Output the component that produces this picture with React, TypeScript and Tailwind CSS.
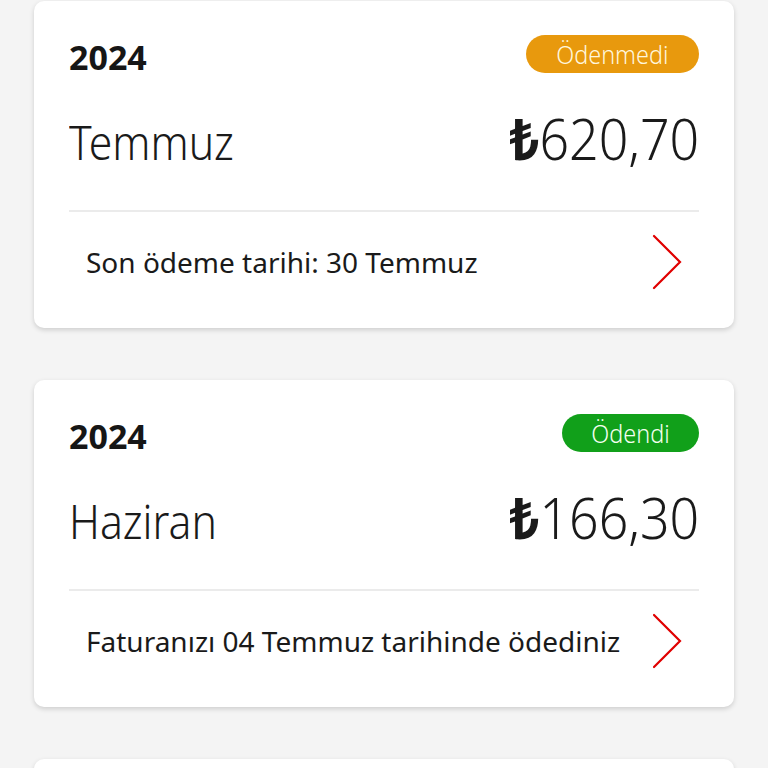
type Bill = {
  year: string;
  status: string;
  paid: boolean;
  month: string;
  amount: string;
  note: string;
};

const bills: Bill[] = [
  { year: "2024", status: "Ödenmedi", paid: false, month: "Temmuz", amount: "620,70", note: "Son ödeme tarihi: 30 Temmuz" },
  { year: "2024", status: "Ödendi", paid: true, month: "Haziran", amount: "166,30", note: "Faturanızı 04 Temmuz tarihinde ödediniz" },
];

function Chevron() {
  return (
    <svg width="30" height="56" viewBox="0 0 30 56" fill="none" className="shrink-0">
      <path d="M2 2 L28 28 L2 54" stroke="#e00000" strokeWidth="2.2" strokeLinecap="round" strokeLinejoin="miter" />
    </svg>
  );
}

function BillCard({ bill }: { bill: Bill }) {
  return (
    <div className="shrink-0 rounded-[10px] bg-white px-[35px] pt-[34px] shadow-[0_2px_5px_rgba(0,0,0,0.16)]">
      <div className="flex h-[38px] items-center justify-between">
        <span className="pt-[6px] text-[34px] font-bold leading-none text-[#161616]">{bill.year}</span>
        <span
          className={
            bill.paid
              ? "flex h-[38px] w-[137px] items-center justify-center rounded-full bg-[#11a01a] text-[26px] font-light leading-none text-[#f4fff0]"
              : "flex h-[38px] w-[173px] items-center justify-center rounded-full bg-[#e8990d] text-[26px] font-light leading-none text-[#fff6dc]"
          }
        >
          <span className="inline-block scale-x-[0.9]">{bill.status}</span>
        </span>
      </div>
      <div className="mt-[37px] flex items-baseline justify-between font-light leading-none text-[#1a1a1a]">
        <span className="inline-block origin-left scale-x-[0.89] text-[48px]">{bill.month}</span>
        <span className="inline-block origin-right scale-x-[0.91] text-[57px]">
          <span className="font-bold">₺</span>
          {bill.amount}
        </span>
      </div>
      <div className="mt-[43px] h-[2px] bg-[#ebebeb]" />
      <div className="flex h-[100px] items-center justify-between pl-[17px] pr-[17px]">
        <span className="text-[28px] text-[#1a1a1a]">{bill.note}</span>
        <Chevron />
      </div>
      <div className="h-[16px]" />
    </div>
  );
}

export default function App() {
  return (
    <div
      className="flex h-[768px] flex-col gap-[52px] overflow-hidden bg-[#f4f4f4] px-[34px] pt-[1px]"
      style={{ fontFamily: '"Noto Sans", "Open Sans", sans-serif' }}
    >
      {bills.map((b, i) => (
        <BillCard key={i} bill={b} />
      ))}
      {/* next card, only its top edge is on screen */}
      <div className="h-[327px] shrink-0 rounded-[10px] bg-white shadow-[0_2px_5px_rgba(0,0,0,0.16)]" />
    </div>
  );
}
